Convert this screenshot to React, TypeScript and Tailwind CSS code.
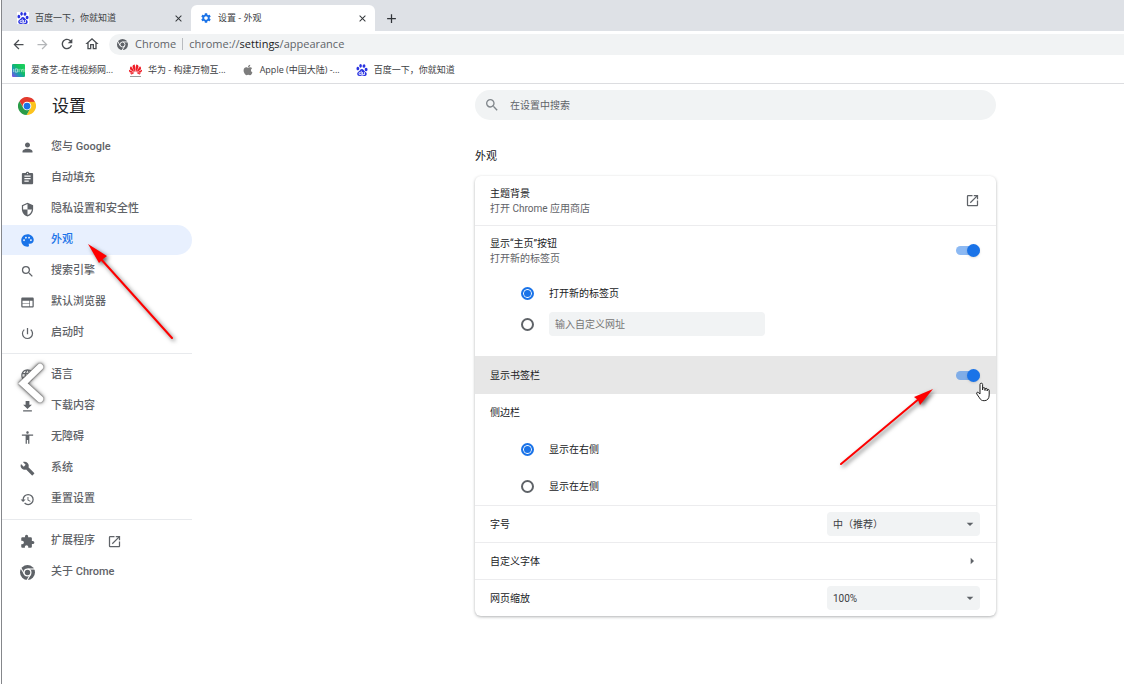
import { useState } from 'react';
import type { FC, ReactNode } from 'react';
import {
  MdAccessibility,
  MdAdd,
  MdArrowBack,
  MdArrowDropDown,
  MdArrowForward,
  MdArrowRight,
  MdAssignment,
  MdBuild,
  MdClose,
  MdExtension,
  MdFileDownload,
  MdLanguage,
  MdOpenInNew,
  MdOutlineHome,
  MdPalette,
  MdPerson,
  MdPowerSettingsNew,
  MdRefresh,
  MdRestore,
  MdSearch,
  MdSecurity,
  MdSettings,
  MdWeb,
} from 'react-icons/md';
import { SiBaidu, SiHuawei } from 'react-icons/si';
import { FaApple } from 'react-icons/fa';

const ChromeMono: FC<{ className?: string }> = ({ className }) => (
  <svg viewBox="0 0 24 24" className={className} aria-hidden="true">
    <circle cx="12" cy="12" r="12" fill="currentColor" />
    <g stroke="#fff" strokeWidth="1.8">
      <path d="M12 6.4H24" />
      <path d="M12 6.4H24" transform="rotate(120 12 12)" />
      <path d="M12 6.4H24" transform="rotate(240 12 12)" />
    </g>
    <circle cx="12" cy="12" r="5.4" fill="currentColor" stroke="#fff" strokeWidth="2" />
  </svg>
);

const ChromeLogo: FC<{ className?: string }> = ({ className }) => (
  <svg viewBox="0 0 24 24" className={className} aria-hidden="true">
    <path d="M12 12V6.5H22.67A12 12 0 0 0 1.9 5.51L7.24 14.75Z" fill="#e33b2e" />
    <path d="M12 12V6.5H22.67A12 12 0 0 0 1.9 5.51L7.24 14.75Z" fill="#fcc31e" transform="rotate(120 12 12)" />
    <path d="M12 12V6.5H22.67A12 12 0 0 0 1.9 5.51L7.24 14.75Z" fill="#2a9c48" transform="rotate(240 12 12)" />
    <circle cx="12" cy="12" r="5.8" fill="#fff" />
    <circle cx="12" cy="12" r="4.5" fill="#1a73e8" />
  </svg>
);

const IqiyiIcon = () => (
  <svg viewBox="0 0 24 24" className="size-[13px]" aria-hidden="true">
    <defs>
      <linearGradient id="iqiyi" x1="0" y1="1" x2="1" y2="0">
        <stop offset="0" stopColor="#8a45f0" />
        <stop offset="0.35" stopColor="#1a9cb0" />
        <stop offset="0.6" stopColor="#10c060" />
        <stop offset="1" stopColor="#1fd45c" />
      </linearGradient>
    </defs>
    <rect width="24" height="24" rx="2" fill="url(#iqiyi)" />
    <path
      d="M3 9v6M6 9h4v6H6zM13 9v6M16 9l2 3 2-3M18 12v3M22 9v6"
      stroke="#fff"
      strokeWidth="1.3"
      fill="none"
      opacity="0.8"
    />
  </svg>
);

const HuaweiIcon = () => (
  <span className="flex w-[13px] flex-col items-center">
    <SiHuawei className="size-[13px] text-[#ee1c25]" />
    <span className="h-px w-[11px] bg-[#9a9a9a]" />
  </span>
);

interface NavItem {
  name: string;
  icon: any;
  external?: boolean;
}

const groups: NavItem[][] = [
  [
    { name: '您与 Google', icon: MdPerson },
    { name: '自动填充', icon: MdAssignment },
    { name: '隐私设置和安全性', icon: MdSecurity },
    { name: '外观', icon: MdPalette },
    { name: '搜索引擎', icon: MdSearch },
    { name: '默认浏览器', icon: MdWeb },
    { name: '启动时', icon: MdPowerSettingsNew },
  ],
  [
    { name: '语言', icon: MdLanguage },
    { name: '下载内容', icon: MdFileDownload },
    { name: '无障碍', icon: MdAccessibility },
    { name: '系统', icon: MdBuild },
    { name: '重置设置', icon: MdRestore },
  ],
  [
    { name: '扩展程序', icon: MdExtension, external: true },
    { name: '关于 Chrome', icon: ChromeMono },
  ],
];

const bookmarks = [
  { name: '爱奇艺-在线视频网...', icon: <IqiyiIcon /> },
  { name: '华为 - 构建万物互...', icon: <HuaweiIcon /> },
  { name: 'Apple (中国大陆) -...', icon: <FaApple className="size-3 text-[#7d7d7d]" /> },
  { name: '百度一下，你就知道', icon: <SiBaidu className="size-3 text-[#2932e1]" /> },
];

const TabStrip = () => (
  <div className="flex h-[31px] items-end bg-[#dee1e6]">
    <div className="flex h-[26px] w-[189px] items-center pr-[7px] pl-[15px]">
      <SiBaidu className="size-3 bg-white text-[#2932e1]" />
      <span className="ml-[6px] flex-1 truncate">百度一下，你就知道</span>
      <button aria-label="关闭" className="text-[#303438]">
        <MdClose className="size-[11px]" />
      </button>
    </div>
    <div className="flex h-[26px] w-[184px] items-center rounded-t-md bg-white pr-[7px] pl-[9px]">
      <MdSettings className="size-3 text-[#1a73e8]" />
      <span className="ml-[6px] flex-1 truncate">设置 - 外观</span>
      <button aria-label="关闭" className="text-[#303438]">
        <MdClose className="size-[11px]" />
      </button>
    </div>
    <button aria-label="新标签页" className="ml-[9px] flex h-[26px] items-center text-[#303438]">
      <MdAdd className="size-[15px]" />
    </button>
  </div>
);

const Toolbar = () => (
  <div className="flex h-[26px] items-center bg-white pl-[9px] text-[#5f6368]">
    <div className="flex w-[98px] items-center gap-[9px] text-[#4a4e52]">
      <button aria-label="后退">
        <MdArrowBack className="size-[15px]" />
      </button>
      <button aria-label="前进" className="text-[#b4b6b9]">
        <MdArrowForward className="size-[15px]" />
      </button>
      <button aria-label="重新加载">
        <MdRefresh className="size-4" />
      </button>
      <button aria-label="主页">
        <MdOutlineHome className="size-4" />
      </button>
    </div>
    <div className="flex h-[21px] flex-1 items-center rounded-l-full bg-[#f1f3f4] pl-2 text-[11px]">
      <ChromeMono className="size-[11px]" />
      <span className="ml-[7px]">Chrome</span>
      <span className="mx-[6px] h-3 w-px bg-[#b9bcc0]" />
      <span>
        chrome://<span className="text-[#202124]">settings</span>/appearance
      </span>
    </div>
  </div>
);

const BookmarkBar = () => (
  <div className="flex h-[27px] items-center gap-4 border-b border-[#dcdde0] bg-white pl-[10px]">
    {bookmarks.map(({ name, icon }) => (
      <a key={name} href="#" className="flex items-center gap-[6px] whitespace-nowrap">
        {icon}
        {name}
      </a>
    ))}
  </div>
);

const Sidebar: FC<{ active: string; onSelect: (name: string) => void }> = ({ active, onSelect }) => (
  <aside className="w-[190px] shrink-0">
    <div className="flex h-12 items-center gap-4 pl-4 pb-1">
      <ChromeLogo className="size-[18px]" />
      <h1 className="text-[17px] leading-5">设置</h1>
    </div>
    <nav className="text-[11px] text-[#5f6368]">
      {groups.map((items, i) => (
        <div key={i} className={`flex flex-col gap-px ${i > 0 ? 'mt-[5px] border-t border-[#e8eaed] pt-[6px]' : ''}`}>
          {items.map(({ name, icon: Icon, external }) => (
            <a
              key={name}
              href="#"
              onClick={() => onSelect(name)}
              className={`flex h-[30px] items-center rounded-r-full pl-[18px] font-medium ${
                active === name ? 'bg-[#e8f0fe] text-[#1a73e8]' : ''
              }`}
            >
              <Icon className="size-[15px]" />
              <span className="ml-4">{name}</span>
              {external && <MdOpenInNew className="ml-3 size-[15px]" />}
            </a>
          ))}
        </div>
      ))}
    </nav>
  </aside>
);

const Toggle: FC<{ label: string }> = ({ label }) => (
  <input
    type="checkbox"
    role="switch"
    aria-label={label}
    defaultChecked
    className="relative h-[13px] w-6 appearance-none before:absolute before:inset-x-0 before:inset-y-[2px] before:rounded-full before:bg-[#bdc1c6] after:absolute after:left-0 after:size-[13px] after:rounded-full after:bg-white after:shadow checked:before:bg-[#1a73e8]/50 checked:after:left-[11px] checked:after:bg-[#1a73e8]"
  />
);

interface RadioProps {
  name: string;
  label: string;
  checked?: boolean;
  children?: ReactNode;
}

const Radio: FC<RadioProps> = ({ name, label, checked, children }) => (
  <div className="flex items-center gap-[15px] pl-[31px]">
    <input
      type="radio"
      id={`${name}-${label}`}
      name={name}
      aria-label={label}
      defaultChecked={checked}
      className="size-[13px] appearance-none rounded-full border-2 border-[#5f6368] checked:border-[#1a73e8] checked:bg-[#1a73e8] checked:shadow-[inset_0_0_0_1px_white]"
    />
    {children ?? <label htmlFor={`${name}-${label}`}>{label}</label>}
  </div>
);

const SelectRow: FC<{ label: string; options: string[] }> = ({ label, options }) => (
  <div className="flex h-[37px] items-center justify-between border-t border-[#ececee] pr-4 pl-[15px]">
    <label htmlFor={label}>{label}</label>
    <div className="relative">
      <select id={label} className="h-6 w-[153px] appearance-none rounded bg-[#f1f3f4] px-[6px] text-[#3c4043]">
        {options.map((option) => (
          <option key={option}>{option}</option>
        ))}
      </select>
      <MdArrowDropDown className="pointer-events-none absolute top-1 right-[2px] size-4 text-[#5f6368]" />
    </div>
  </div>
);

const Appearance = () => (
  <section>
    <h2 className="mt-[29px] text-[11px] leading-4">外观</h2>
    <div className="mt-[11px] rounded-md bg-white shadow-[0_1px_3px_rgba(60,64,67,0.4)]">
      <div className="flex h-[49px] items-center justify-between pr-4 pl-[15px]">
        <div className="leading-[15px]">
          <div>主题背景</div>
          <div className="text-[#5f6368]">打开 Chrome 应用商店</div>
        </div>
        <button aria-label="打开 Chrome 应用商店">
          <MdOpenInNew className="size-[15px] text-[#5f6368]" />
        </button>
      </div>
      <div className="h-[131px] border-t border-[#ececee] pr-4 pl-[15px]">
        <div className="flex h-[49px] items-center justify-between">
          <div className="leading-[15px]">
            <div>显示“主页”按钮</div>
            <div className="text-[#5f6368]">打开新的标签页</div>
          </div>
          <Toggle label="显示“主页”按钮" />
        </div>
        <div className="flex flex-col gap-[11px] pt-[11px]">
          <Radio name="home" label="打开新的标签页" checked />
          <Radio name="home" label="自定义网址">
            <input
              type="text"
              aria-label="输入自定义网址"
              placeholder="输入自定义网址"
              className="h-6 w-[216px] rounded bg-[#f1f3f4] px-[6px] placeholder:text-[#757575]"
            />
          </Radio>
        </div>
      </div>
      <div className="flex h-[38px] items-center justify-between bg-[#e7e7e7] pr-4 pl-[15px]">
        <span>显示书签栏</span>
        <Toggle label="显示书签栏" />
      </div>
      <div className="h-[111px] px-[15px]">
        <div className="flex h-9 items-center">侧边栏</div>
        <div className="flex flex-col gap-[22px] pt-3">
          <Radio name="side" label="显示在右侧" checked />
          <Radio name="side" label="显示在左侧" />
        </div>
      </div>
      <SelectRow label="字号" options={['中（推荐）', '小', '大']} />
      <button className="flex h-[37px] w-full items-center justify-between border-t border-[#ececee] pr-4 pl-[15px]">
        自定义字体
        <MdArrowRight className="size-4 text-[#5f6368]" />
      </button>
      <SelectRow label="网页缩放" options={['100%', '75%', '125%']} />
    </div>
  </section>
);

// red arrows, the "previous" chevron and the mouse pointer
const Annotations = () => (
  <>
    <svg className="pointer-events-none absolute top-[240px] left-[82px] h-[110px] w-[104px]" viewBox="0 0 104 110">
      <g style={{ filter: 'drop-shadow(2px 2px 2px rgba(0,0,0,0.6))' }}>
        <path d="M90 98L18 18" stroke="#fe0000" strokeWidth="2" strokeLinecap="round" />
        <path d="M6 4L25 16L21 19L17 23Z" fill="#fe0000" />
      </g>
    </svg>
    <svg className="pointer-events-none absolute top-[380px] left-[830px] h-[95px] w-[115px]" viewBox="0 0 115 95">
      <g style={{ filter: 'drop-shadow(2px 2px 2px rgba(0,0,0,0.6))' }}>
        <path d="M11 84L90 18" stroke="#fe0000" strokeWidth="2" strokeLinecap="round" />
        <path d="M103 9L84 17L88 20L90 25Z" fill="#fe0000" />
      </g>
    </svg>
    <svg className="pointer-events-none absolute top-[356px] left-[12px] h-[56px] w-[40px]" viewBox="0 0 40 56">
      <path
        d="M28 11L11 27.500L28 43"
        fill="none"
        stroke="#fff"
        strokeWidth="6.5"
        strokeLinecap="round"
        style={{ filter: 'drop-shadow(0 0 1px #444) drop-shadow(0 0 2px #777)' }}
      />
    </svg>
    <svg className="pointer-events-none absolute top-[382px] left-[975px] h-5 w-4" viewBox="0 0 16 20">
      <path
        d="M5 12V2.5a1.3 1.3 0 0 1 2.6 0V8V6.8a1.2 1.2 0 0 1 2.4 0V8.5V7.4a1.1 1.1 0 0 1 2.2 0V9V8.4a1 1 0 0 1 2 0V13c0 3.5-1.8 5.7-5 5.7c-2.600 0-3.700-1-4.700-2.800L1.800 12c-.8-1.500.9-2.500 1.900-1.200Z"
        fill="#fff"
        stroke="#222"
        strokeWidth="1"
        strokeLinejoin="round"
      />
    </svg>
  </>
);

export default function App() {
  const [active, setActive] = useState('外观');

  return (
    <div className="relative bg-white pl-px font-[Roboto,'Noto_Sans_CJK_SC',sans-serif] text-[10px] text-[#202124]">
      <div className="min-h-screen border-l border-[#85878b]">
        <header className="font-['Open_Sans','Noto_Sans_CJK_SC',sans-serif] text-[9px] text-[#3c4043]">
          <TabStrip />
          <Toolbar />
          <BookmarkBar />
        </header>
        <div className="flex">
          <Sidebar active={active} onSelect={setActive} />
          <main className="flex-1 pt-[6px] pr-32 pl-[283px]">
            <label className="flex h-[30px] items-center gap-[10px] rounded-full bg-[#f1f3f4] pl-[9px]">
              <MdSearch className="size-4 text-[#80868b]" />
              <input
                type="search"
                aria-label="在设置中搜索"
                placeholder="在设置中搜索"
                className="flex-1 bg-transparent placeholder:text-[#5f6368]"
              />
            </label>
            <Appearance />
          </main>
        </div>
      </div>
      <Annotations />
    </div>
  );
}
